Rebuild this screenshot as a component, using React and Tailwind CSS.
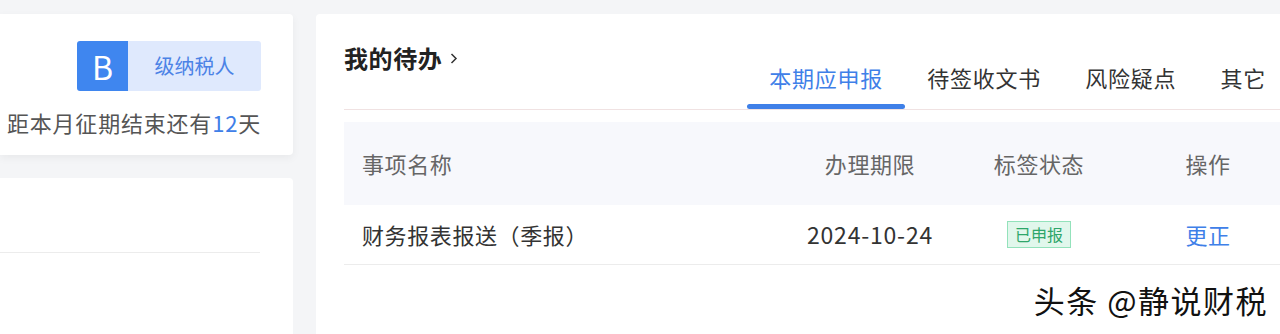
const font = { fontFamily: '"Noto Sans CJK SC", "Noto Sans", sans-serif' };

const tabs = ["本期应申报", "待签收文书", "风险疑点", "其它"];

function LeftColumn() {
  return (
    <div className="flex w-[293px] shrink-0 flex-col gap-[23px]">
      <div className="flex h-[141px] flex-col items-end rounded-r-[4px] bg-white pr-[32px] pt-[27px] shadow-[0_3px_8px_rgba(0,0,0,0.05)]">
        <div className="flex h-[50px] overflow-hidden rounded-[3px]">
          <div className="flex w-[51px] items-center justify-center bg-[#3f86ef] text-[32px] leading-none text-white">
            B
          </div>
          <div className="flex w-[133px] items-center justify-center bg-[#dfe9fd] text-[20px] text-[#4b82e6]">
            级纳税人
          </div>
        </div>
        <p className="mt-[16px] text-[22px] leading-[30px] tracking-[0.8px] text-[#555]">
          距本月征期结束还有<span className="text-[#3f80e8]">12</span>天
        </p>
      </div>
      <div className="h-[200px] rounded-r-[4px] bg-white">
        <div className="mr-[33px] h-[75px] border-b border-[#ececec]" />
      </div>
    </div>
  );
}

function TodoCard() {
  return (
    <div className="h-[340px] w-[1000px] shrink-0 rounded-[4px] bg-white px-[28px]">
      <div className="flex items-end justify-between border-b border-[#f0e2e2]">
        <div className="mb-auto mt-[29px] flex items-center gap-[8px] text-[24px] font-bold leading-[30px] tracking-[0.6px] text-[#222]">
          我的待办
          <svg width="8" height="11" viewBox="0 0 8 11" fill="none">
            <path d="M1.5 1 6 5.5 1.5 10" stroke="#333" strokeWidth="1.5" />
          </svg>
        </div>
        <div className="flex">
          {tabs.map((t, i) => (
            <div key={t} className="flex flex-col items-center px-[22px] pt-[48px]">
              <span
                className={
                  "text-[22px] leading-[30px] tracking-[0.8px] " +
                  (i === 0 ? "text-[#3f80e8]" : "text-[#333]")
                }
              >
                {t}
              </span>
              <div
                className={
                  "mt-[12px] h-[5px] w-[calc(100%+44px)] rounded-full " +
                  (i === 0 ? "bg-[#3f80e8]" : "bg-transparent")
                }
              />
            </div>
          ))}
        </div>
      </div>

      <div className="mt-[12px]">
        <div className="grid h-[83px] grid-cols-[446px_160px_178px_1fr] items-center bg-[#f7f8fc] text-[22px] tracking-[0.6px] text-[#666]">
          <div className="pl-[18px]">事项名称</div>
          <div className="text-center">办理期限</div>
          <div className="text-center">标签状态</div>
          <div className="text-center">操作</div>
        </div>
        <div className="grid h-[60px] grid-cols-[446px_160px_178px_1fr] items-center border-b border-[#ececec] text-[22px] text-[#333]">
          <div className="pl-[18px] tracking-[0.6px]">财务报表报送（季报）</div>
          <div className="text-center text-[23px] tracking-[0.8px]">2024-10-24</div>
          <div className="flex justify-center">
            <span className="border border-[#93e2bb] bg-[#e1f7ec] px-[7px] text-[16px] leading-[25px] text-[#2ea66a]">
              已申报
            </span>
          </div>
          <div className="text-center tracking-[0.6px] text-[#3f80e8]">更正</div>
        </div>
      </div>
    </div>
  );
}

export default function App() {
  return (
    <div className="relative h-[334px] w-[1280px] overflow-hidden bg-[#f4f5f7]" style={font}>
      <div className="flex gap-[23px] pt-[14px]">
        <LeftColumn />
        <TodoCard />
      </div>
      <div className="absolute right-[12px] top-[281px] text-[31px] leading-[38px] tracking-[1.5px] text-[#111] [text-shadow:1px_1px_0_#fff,-1px_-1px_0_#fff,1px_-1px_0_#fff,-1px_1px_0_#fff]">
        头条 @静说财税
      </div>
    </div>
  );
}
